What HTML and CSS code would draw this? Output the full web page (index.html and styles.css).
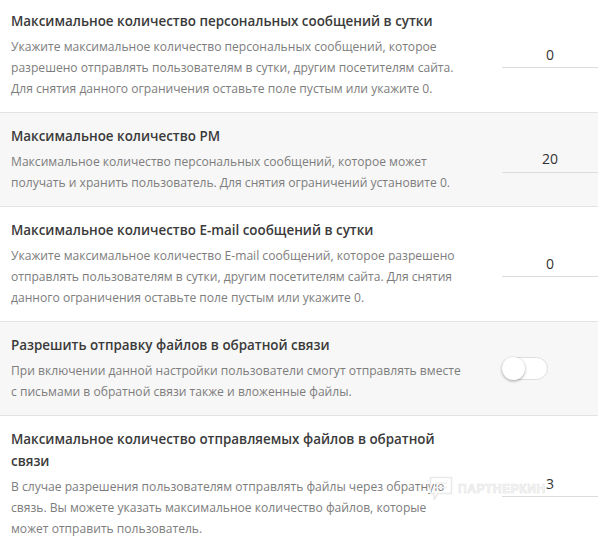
FILE: index.html
```html
<!DOCTYPE html>
<html lang="ru">
<head>
<meta charset="utf-8">
<link rel="stylesheet" href="styles.css">
</head>
<body>
<div class="settings">
  <div class="row first">
    <div class="info">
      <div class="title">Максимальное количество персональных сообщений в сутки</div>
      <div class="desc">Укажите максимальное количество персональных сообщений, которое<br>разрешено отправлять пользователям в сутки, другим посетителям сайта.<br>Для снятия данного ограничения оставьте поле пустым или укажите 0.</div>
    </div>
    <div class="control"><input class="num" type="text" value="0"></div>
  </div>
  <div class="row alt">
    <div class="info">
      <div class="title">Максимальное количество PM</div>
      <div class="desc">Максимальное количество персональных сообщений, которое может<br>получать и хранить пользователь. Для снятия ограничений установите 0.</div>
    </div>
    <div class="control"><input class="num" type="text" value="20"></div>
  </div>
  <div class="row">
    <div class="info">
      <div class="title">Максимальное количество E-mail сообщений в сутки</div>
      <div class="desc">Укажите максимальное количество E-mail сообщений, которое разрешено<br>отправлять пользователям в сутки, другим посетителям сайта. Для снятия<br>данного ограничения оставьте поле пустым или укажите 0.</div>
    </div>
    <div class="control"><input class="num" type="text" value="0"></div>
  </div>
  <div class="row alt">
    <div class="info">
      <div class="title">Разрешить отправку файлов в обратной связи</div>
      <div class="desc">При включении данной настройки пользователи смогут отправлять вместе<br>с письмами в обратной связи также и вложенные файлы.</div>
    </div>
    <div class="control"><span class="switch"><span class="knob"></span></span></div>
  </div>
  <div class="row last">
    <div class="info">
      <div class="title">Максимальное количество отправляемых файлов в обратной<br>связи</div>
      <div class="desc">В случае разрешения пользователям отправлять файлы через обратную<br>связь. Вы можете указать максимальное количество файлов, которые<br>может отправить пользователь.</div>
    </div>
    <div class="control"><input class="num" type="text" value="3"></div>
    <div class="watermark">
      <svg width="24" height="26" viewBox="0 0 24 26"><path d="M1.5 1.5h21v16H9l-4 6v-6H1.5z" fill="none" stroke="#e9e9e9" stroke-width="1.5" stroke-linejoin="round"/><path d="M6 7h12M6 11.5h12" stroke="#efefef" stroke-width="1.5"/></svg>
      <span>ПАРТНЕРКИН</span>
    </div>
  </div>
</div>
</body>
</html>
```
FILE: styles.css
```css
html, body {
  margin: 0;
  padding: 0;
  background: #fff;
}
body {
  font-family: "Open Sans", "Noto Sans", sans-serif;
  overflow: hidden;
}
.settings {
  margin-top: -2px;
}
.row {
  display: flex;
  align-items: center;
  padding: 12px 0 13px 11px;
  border-bottom: 1px solid #e3e3e3;
  position: relative;
}
.row.alt {
  background: #f7f7f7;
}
.row.last {
  border-bottom: none;
}
.info {
  width: 460px;
  flex: none;
}
.title {
  font-size: 13.4px;
  font-weight: 600;
  line-height: 22px;
  color: #3a3a3a;
  white-space: nowrap;
}
.desc {
  margin-top: 4px;
  font-size: 12.1px;
  line-height: 21px;
  color: #7d7d7d;
  white-space: nowrap;
}
.control {
  margin-left: auto;
  width: 96px;
  flex: none;
}
.num {
  display: block;
  box-sizing: border-box;
  width: 96px;
  height: 27px;
  border: none;
  border-bottom: 1px solid #dcdcdc;
  background: transparent;
  text-align: center;
  font-family: inherit;
  font-size: 14px;
  color: #333;
  padding: 0;
  outline: none;
}
.switch {
  display: block;
  position: relative;
  width: 46px;
  height: 23px;
  box-sizing: border-box;
  border: 1px solid #dedede;
  border-radius: 12px;
  background: #fff;
}
.knob {
  position: absolute;
  left: -1px;
  top: -1px;
  width: 23px;
  height: 23px;
  border-radius: 50%;
  background: #fff;
  box-shadow: 0 1px 3px rgba(0,0,0,0.35);
}
.watermark {
  position: absolute;
  left: 429px;
  top: 60px;
  display: flex;
  align-items: center;
  gap: 5px;
  pointer-events: none;
}
.watermark span {
  font-family: "Liberation Sans", sans-serif;
  font-weight: bold;
  font-size: 12px;
  letter-spacing: 0.6px;
  color: #f7f7f7;
  -webkit-text-stroke: 0.6px #e4e4e4;
}
```
